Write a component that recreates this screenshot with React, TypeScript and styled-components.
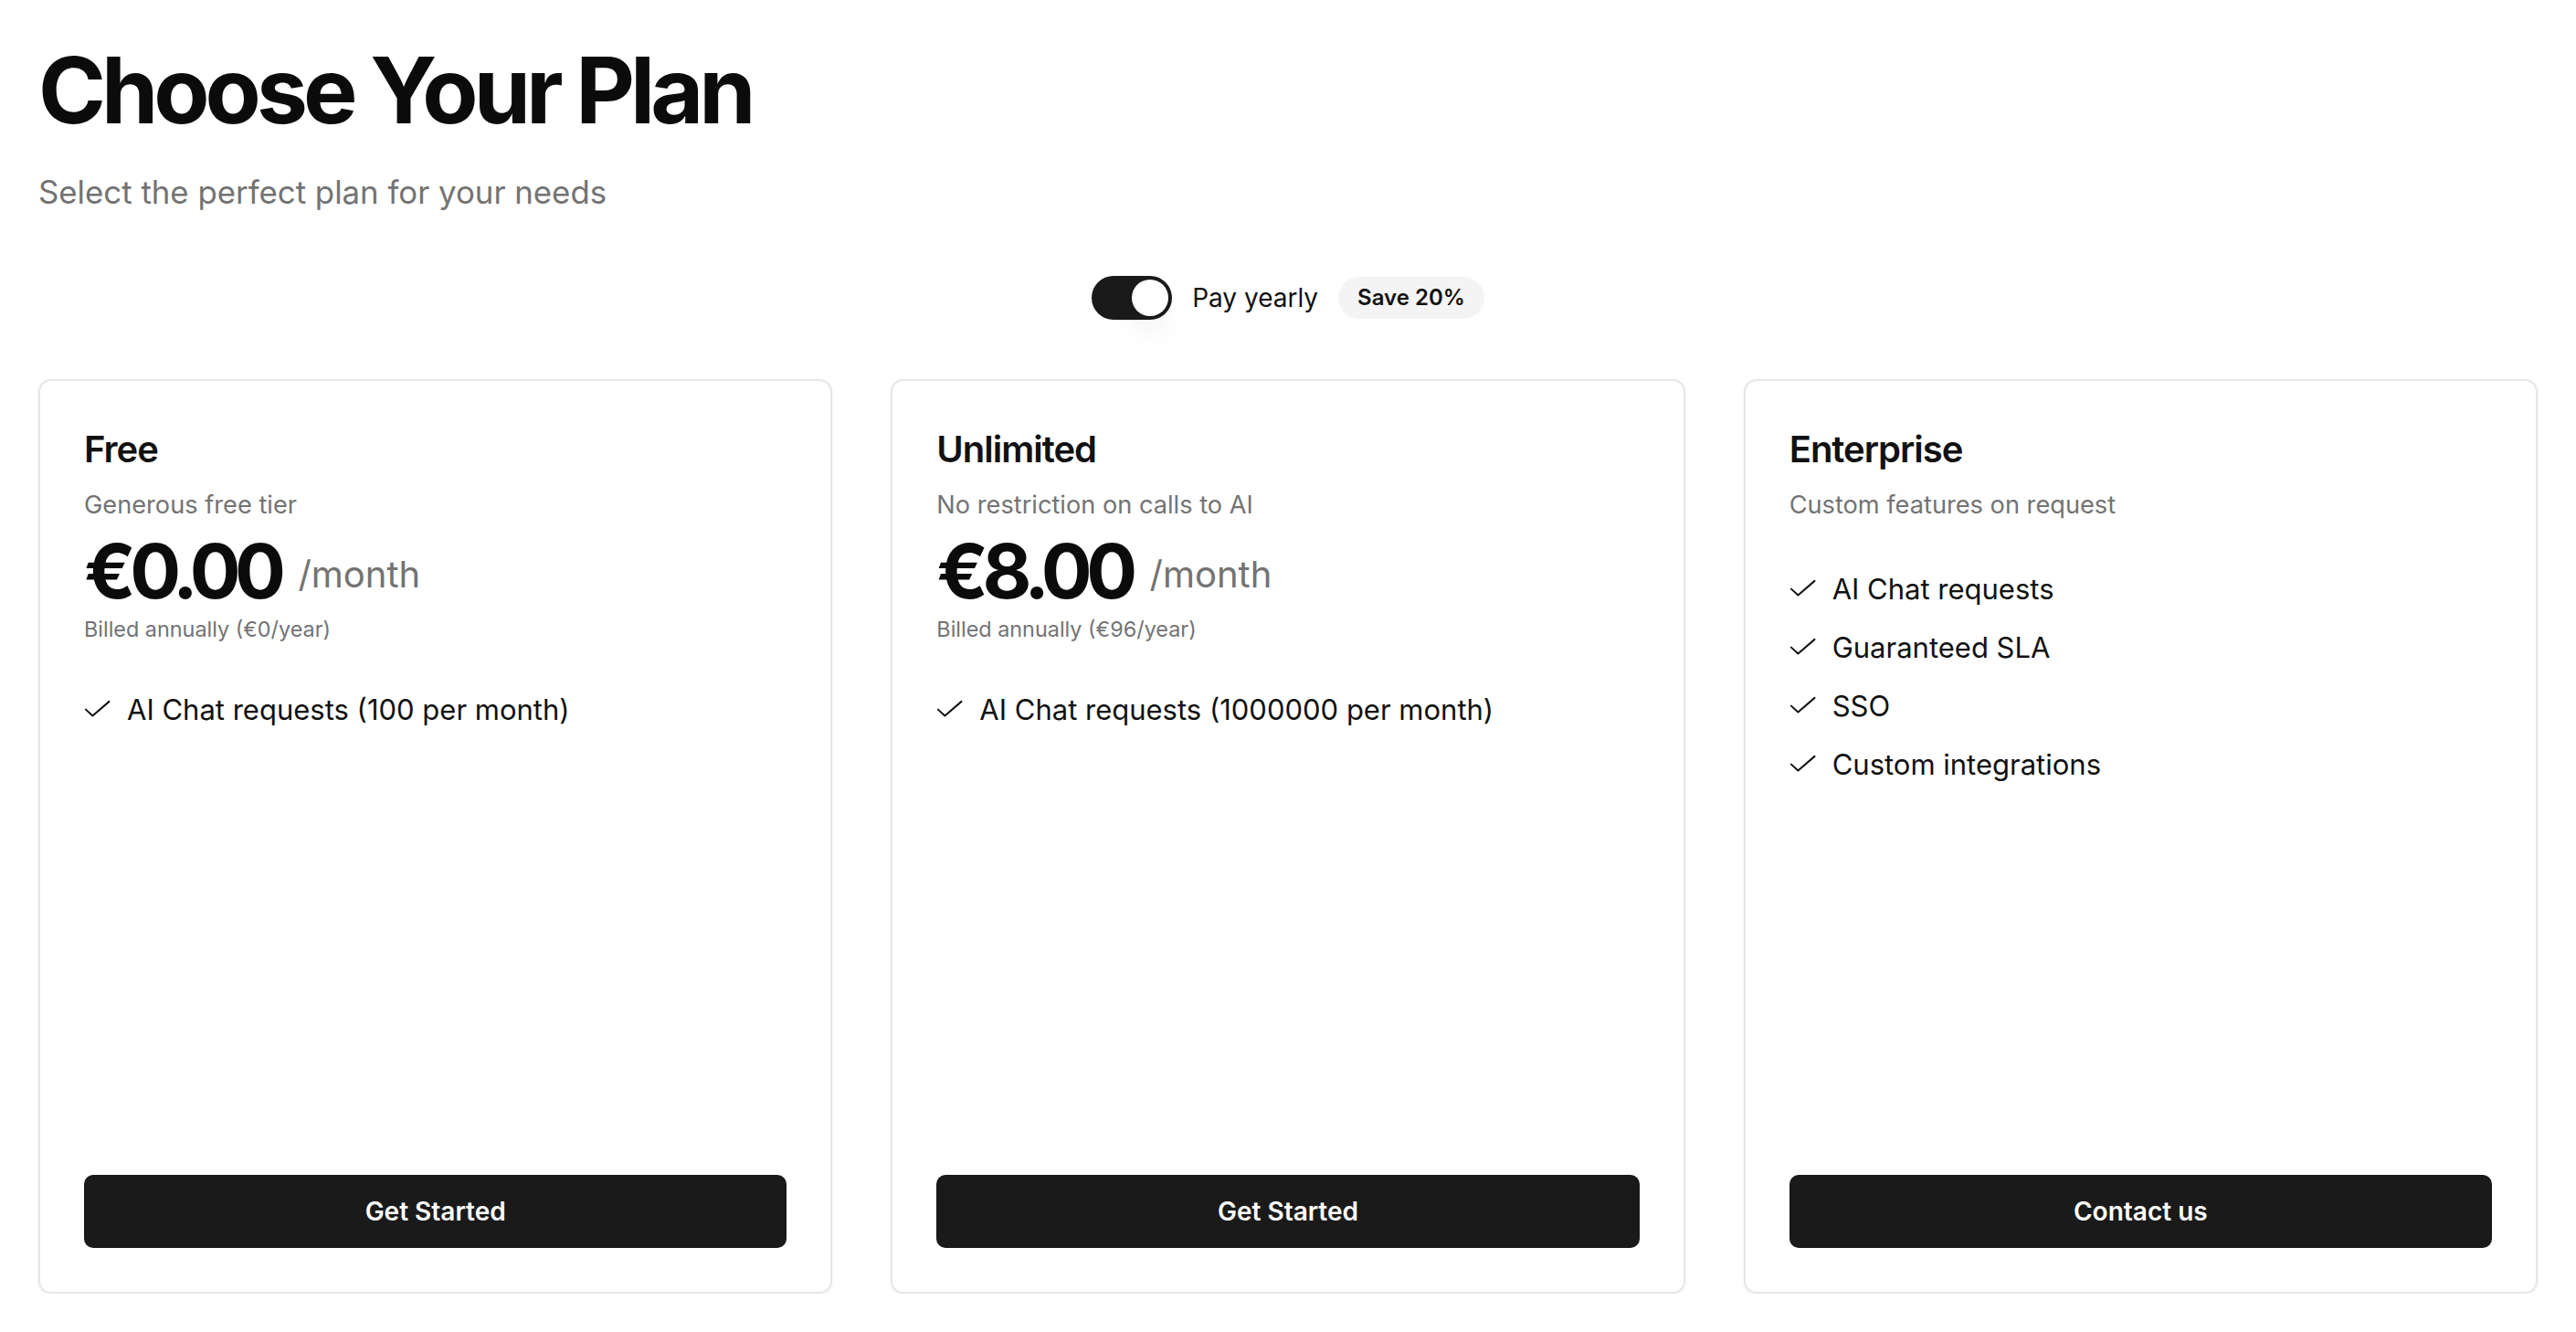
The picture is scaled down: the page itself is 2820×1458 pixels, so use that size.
import React, { useState } from "react";
import styled, { createGlobalStyle } from "styled-components";

const GlobalStyle = createGlobalStyle`
  * { box-sizing: border-box; }
  body {
    margin: 0;
    background: #ffffff;
    font-family: "Inter", "Liberation Sans", sans-serif;
    color: #111111;
  }
`;

const Page = styled.div`
  padding: 49px 42px 0 42px;
  display: flex;
  flex-direction: column;
`;
const Title = styled.h1`
  margin: 0;
  font-size: 100px;
  line-height: 1;
  font-weight: 700;
  letter-spacing: -0.05em;
  color: #0b0b0b;
`;
const Subtitle = styled.p`
  margin: 37px 0 0;
  font-size: 34.8px;
  line-height: 1.4;
  color: #737373;
`;
const BillingRow = styled.div`
  margin-top: 67px;
  display: flex;
  justify-content: center;
  align-items: center;
  gap: 22px;
`;
const Switch = styled.button<{ $on: boolean }>`
  position: relative;
  width: 88px;
  height: 48px;
  border: none;
  border-radius: 999px;
  padding: 0;
  cursor: pointer;
  background: ${(p) => (p.$on ? "#1a1a1a" : "#d4d4d4")};
`;
const Knob = styled.span<{ $on: boolean }>`
  position: absolute;
  top: 4px;
  left: ${(p) => (p.$on ? "44px" : "4px")};
  width: 40px;
  height: 40px;
  border-radius: 50%;
  background: #ffffff;
  box-shadow: 0 20px 30px -6px rgba(0, 0, 0, 0.09);
`;
const SwitchLabel = styled.span`
  font-size: 28px;
  color: #111111;
`;
const SaveBadge = styled.span`
  display: inline-flex;
  align-items: center;
  height: 46px;
  padding: 0 21px;
  border-radius: 999px;
  background: #f4f4f4;
  font-size: 24px;
  font-weight: 600;
  color: #111111;
`;
const Plans = styled.div`
  margin-top: 65px;
  display: grid;
  grid-template-columns: repeat(3, 1fr);
  gap: 64px;
`;
const Card = styled.div`
  height: 1001px;
  border: 2px solid #e6e6e6;
  border-radius: 14px;
  box-shadow: 0 2px 4px rgba(0, 0, 0, 0.05);
  padding: 49px 48px 48px;
  display: flex;
  flex-direction: column;
`;
const PlanName = styled.h2`
  margin: 0;
  font-size: 40px;
  line-height: 52px;
  font-weight: 600;
  letter-spacing: -0.025em;
`;
const PlanDesc = styled.p`
  margin: 13px 0 0;
  font-size: 27.2px;
  line-height: 43px;
  color: #737373;
`;
const PriceRow = styled.div`
  margin-top: 9px;
  display: flex;
  align-items: flex-end;
  gap: 20px;
`;
const Price = styled.span`
  font-size: 83px;
  line-height: 84px;
  font-weight: 700;
  letter-spacing: -0.08em;
  color: #0b0b0b;
`;
const Period = styled.span`
  font-size: 40px;
  line-height: 40px;
  margin-bottom: 18px;
  color: #737373;
`;
const Billed = styled.p`
  margin: 5px 0 0;
  font-size: 23.4px;
  line-height: 34px;
  color: #737373;
`;
const Features = styled.ul`
  list-style: none;
  margin: 49px 0 0;
  padding: 0;
  display: flex;
  flex-direction: column;
  gap: 21px;
  flex: 1;
`;
const Feature = styled.li`
  display: flex;
  align-items: center;
  gap: 17px;
  font-size: 31px;
  line-height: 43px;
  color: #111111;
`;
const ActionButton = styled.button`
  width: 100%;
  height: 80px;
  border: none;
  border-radius: 10px;
  background: #1a1a1a;
  color: #ffffff;
  font-family: inherit;
  font-size: 28px;
  font-weight: 600;
  cursor: pointer;
`;

const CheckIcon = () => (
  <svg width="30" height="30" viewBox="0 0 24 24" fill="none">
    <path
      d="M1.5 12.5 L7.5 18 L22 5.5"
      stroke="#111111"
      strokeWidth="1.6"
      strokeLinecap="round"
      strokeLinejoin="round"
    />
  </svg>
);

type Plan = {
  name: string;
  desc: string;
  price?: string;
  billed?: string;
  features: string[];
  cta: string;
};

const plans: Plan[] = [
  {
    name: "Free",
    desc: "Generous free tier",
    price: "€0.00",
    billed: "Billed annually (€0/year)",
    features: ["AI Chat requests (100 per month)"],
    cta: "Get Started",
  },
  {
    name: "Unlimited",
    desc: "No restriction on calls to AI",
    price: "€8.00",
    billed: "Billed annually (€96/year)",
    features: ["AI Chat requests (1000000 per month)"],
    cta: "Get Started",
  },
  {
    name: "Enterprise",
    desc: "Custom features on request",
    features: ["AI Chat requests", "Guaranteed SLA", "SSO", "Custom integrations"],
    cta: "Contact us",
  },
];

function App() {
  const [yearly, setYearly] = useState(true);

  return (
    <Page>
      <GlobalStyle />
      <Title>Choose Your Plan</Title>
      <Subtitle>Select the perfect plan for your needs</Subtitle>
      <BillingRow>
        <Switch $on={yearly} onClick={() => setYearly(!yearly)}>
          <Knob $on={yearly} />
        </Switch>
        <SwitchLabel>Pay yearly</SwitchLabel>
        <SaveBadge>Save 20%</SaveBadge>
      </BillingRow>
      <Plans>
        {plans.map((plan) => (
          <Card key={plan.name}>
            <PlanName>{plan.name}</PlanName>
            <PlanDesc>{plan.desc}</PlanDesc>
            {plan.price && (
              <>
                <PriceRow>
                  <Price>{plan.price}</Price>
                  <Period>/month</Period>
                </PriceRow>
                <Billed>{plan.billed}</Billed>
              </>
            )}
            <Features>
              {plan.features.map((f) => (
                <Feature key={f}>
                  <CheckIcon />
                  {f}
                </Feature>
              ))}
            </Features>
            <ActionButton>{plan.cta}</ActionButton>
          </Card>
        ))}
      </Plans>
    </Page>
  );
}

export default App;
